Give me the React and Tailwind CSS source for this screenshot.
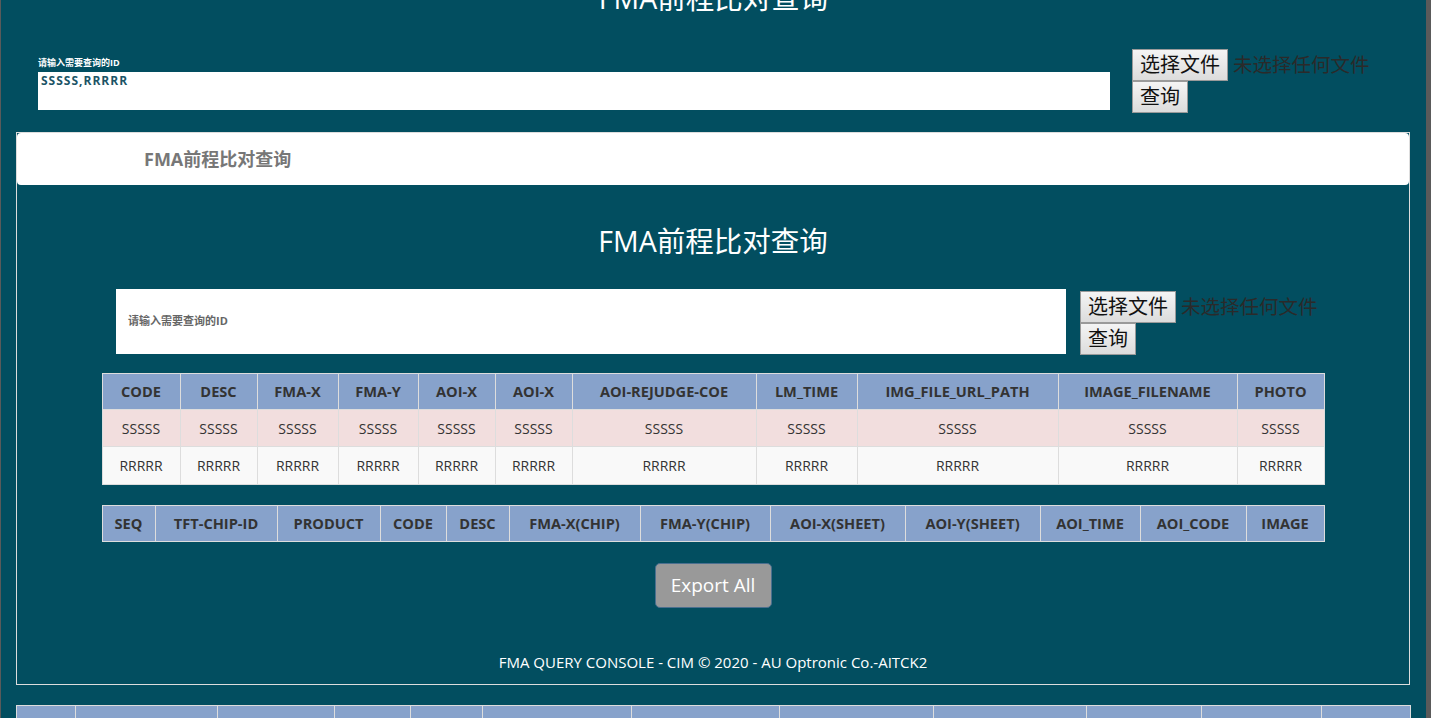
const FONT = { fontFamily: '"Open Sans", "Noto Sans CJK SC", sans-serif' };

const table1 = [
  ['CODE', 78], ['DESC', 77], ['FMA-X', 81], ['FMA-Y', 80], ['AOI-X', 77], ['AOI-X', 77],
  ['AOI-REJUDGE-COE', 184], ['LM_TIME', 101], ['IMG_FILE_URL_PATH', 201], ['IMAGE_FILENAME', 179], ['PHOTO', 87],
];

const table2 = [
  ['SEQ', 53], ['TFT-CHIP-ID', 122], ['PRODUCT', 103], ['CODE', 66], ['DESC', 63], ['FMA-X(CHIP)', 131],
  ['FMA-Y(CHIP)', 130], ['AOI-X(SHEET)', 135], ['AOI-Y(SHEET)', 135], ['AOI_TIME', 100], ['AOI_CODE', 106], ['IMAGE', 78],
];

const table3 = [
  ['SEQ', 59], ['TFT-CHIP-ID', 142], ['PRODUCT', 117], ['CODE', 76], ['DESC', 72], ['FMA-X(CHIP)', 149],
  ['FMA-Y(CHIP)', 148], ['AOI-X(SHEET)', 154], ['AOI-Y(SHEET)', 153], ['AOI_TIME', 115], ['AOI_CODE', 120], ['IMAGE', 89],
];

function HeadRow({ cols }) {
  return (
    <tr className="bg-[#87a2cb] h-[36px]">
      {cols.map(([name, w], i) => (
        <th
          key={i}
          style={{ width: w }}
          className="border border-[#dddddd] text-[14.6px] font-bold text-[#333] text-center align-middle p-0"
        >
          {name}
        </th>
      ))}
    </tr>
  );
}

function FileControls() {
  return (
    <div className="flex flex-col items-start">
      <div className="flex items-center">
        <button className="h-[32px] px-[7px] border border-[#9a9a9a] bg-gradient-to-b from-[#f4f4f4] to-[#dcdcdc] text-[20px] leading-none text-[#111]">
          选择文件
        </button>
        <span className="ml-[5px] text-[19.5px] text-[#2a2a2a]">未选择任何文件</span>
      </div>
      <button className="h-[32px] px-[7px] border border-[#9a9a9a] bg-gradient-to-b from-[#f4f4f4] to-[#dcdcdc] text-[20px] leading-none text-[#111]">
        查询
      </button>
    </div>
  );
}

export default function App() {
  return (
    <div
      style={FONT}
      className="h-[718px] w-[1431px] overflow-hidden bg-[#024e60] border-l border-l-[#5a5a5a] border-r-[5px] border-r-[#5a5a5a]"
    >
      {/* top, scrolled part */}
      <h1 className="mt-[-19px] h-[34px] text-center text-[28.5px] leading-[34px] text-white">FMA前程比对查询</h1>

      <div className="mt-[34px] flex items-start pl-[37px]">
        <div className="mt-[8px] w-[1072px]">
          <div className="h-[15px] text-[9px] font-bold leading-[12px] text-white">请输入需要查询的ID</div>
          <div className="h-[38px] bg-white px-[3px] pt-[1px] text-[12px] font-bold tracking-[1px] leading-[16px] text-[#1b5466]">
            SSSSS,RRRRR
          </div>
        </div>
        <div className="ml-[22px]">
          <FileControls />
        </div>
      </div>

      {/* main panel */}
      <div className="ml-[15px] mr-[16px] mt-[19px] border border-[#dddddd]">
        <div className="h-[52px] rounded-[4px] bg-white flex items-center pl-[127px]">
          <span className="text-[18px] font-bold text-[#777]">FMA前程比对查询</span>
        </div>

        <h2 className="mt-[39px] text-center text-[28.5px] leading-[34px] text-white">FMA前程比对查询</h2>

        <div className="mt-[31px] flex items-start pl-[99px]">
          <div className="h-[65px] w-[950px] bg-white flex items-center pl-[12px]">
            <span className="text-[11px] font-bold text-[#666]">请输入需要查询的ID</span>
          </div>
          <div className="ml-[14px] mt-[2px]">
            <FileControls />
          </div>
        </div>

        <table className="mx-auto mt-[18px] w-[1222px] table-fixed border-collapse">
          <thead>
            <HeadRow cols={table1} />
          </thead>
          <tbody>
            <tr className="bg-[#f2dede] h-[37px]">
              {table1.map((c, i) => (
                <td key={i} className="border border-[#dddddd] text-center text-[14px] text-[#333] p-0">SSSSS</td>
              ))}
            </tr>
            <tr className="bg-[#f9f9f9] h-[38px]">
              {table1.map((c, i) => (
                <td key={i} className="border border-[#dddddd] text-center text-[14px] text-[#333] p-0">RRRRR</td>
              ))}
            </tr>
          </tbody>
        </table>

        <table className="mx-auto mt-[20px] w-[1222px] table-fixed border-collapse">
          <thead>
            <HeadRow cols={table2} />
          </thead>
        </table>

        <div className="mt-[21px] flex justify-center">
          <button className="h-[45px] w-[117px] rounded-[5px] border border-[#4a6f8f] bg-[#999999] text-[19px] text-white">
            Export All
          </button>
        </div>

        <div className="mt-[44px] mb-[12px] text-center text-[15px] leading-[20px] text-white">
          FMA QUERY CONSOLE - CIM © 2020 - AU Optronic Co.-AITCK2
        </div>
      </div>

      {/* next table, cut off by the window */}
      <table className="ml-[15px] mt-[20px] w-[1394px] table-fixed border-collapse">
        <thead>
          <HeadRow cols={table3} />
        </thead>
      </table>
    </div>
  );
}
